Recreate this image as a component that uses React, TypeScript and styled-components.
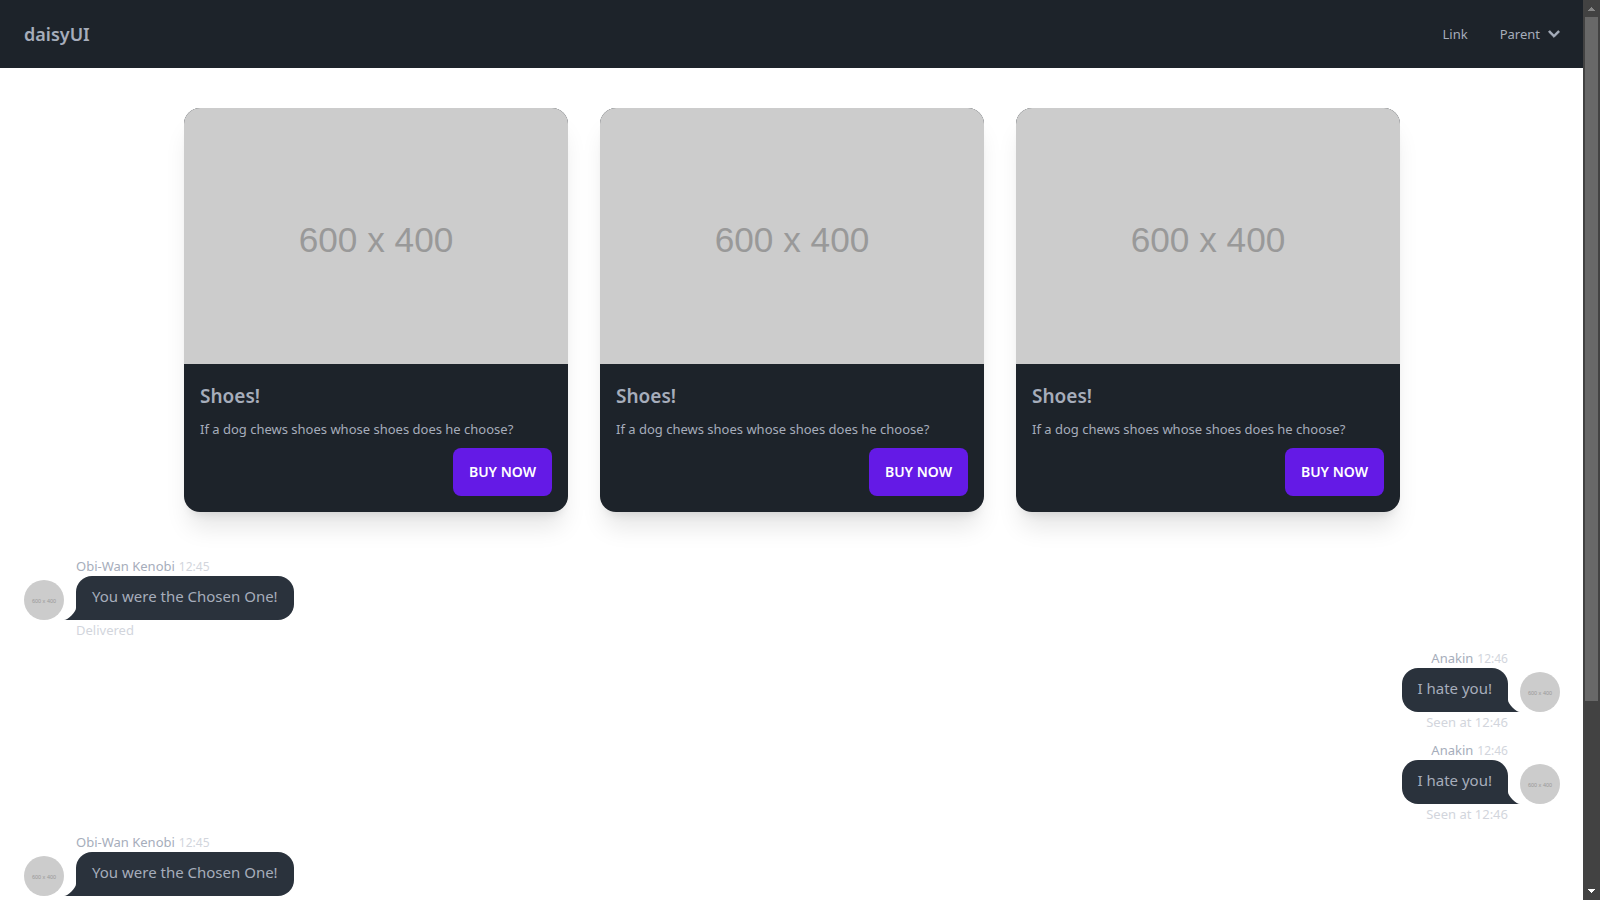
import React from "react";
import styled, { createGlobalStyle } from "styled-components";

const color = {
  base: "#1d232a",
  bubble: "#2a323c",
  text: "#a6adbb",
  primary: "#641ae6",
  placeholder: "#cccccc",
  placeholderText: "#999999",
};

const GlobalStyle = createGlobalStyle`
  *, *::before, *::after { box-sizing: border-box; }
  body {
    margin: 0;
    background: #ffffff;
    color: ${color.text};
    font-family: "Noto Sans", "Open Sans", sans-serif;
    font-size: 15px;
    line-height: 24px;
  }
`;

const Page = styled.div`
  height: 100vh;
  overflow: hidden;
  padding-right: 16px;
`;

/* Navigation bar */

const Navbar = styled.header`
  display: flex;
  align-items: center;
  justify-content: space-between;
  min-height: 68px;
  padding: 0 8px;
  background: ${color.base};
`;

const Brand = styled.a`
  padding: 8px 16px;
  color: inherit;
  font-size: 18px;
  font-weight: 600;
  line-height: 28px;
  text-decoration: none;
`;

const Menu = styled.ul`
  display: flex;
  margin: 0;
  padding: 0;
  list-style: none;
  font-size: 13px;
  line-height: 20px;
`;

const MenuLink = styled.a`
  display: block;
  padding: 8px 16px;
  color: inherit;
  text-decoration: none;
`;

const MenuToggle = styled.button`
  display: flex;
  align-items: center;
  gap: 8px;
  padding: 8px 16px;
  border: 0;
  background: none;
  color: inherit;
  font: inherit;
  cursor: pointer;
`;

const ChevronIcon = styled.svg`
  width: 12px;
  height: 8px;
  fill: currentColor;
  stroke: currentColor;
  stroke-width: 0.8;
`;

/* Product cards */

const CardGrid = styled.section`
  display: grid;
  grid-template-columns: repeat(3, 1fr);
  gap: 32px;
  max-width: 1280px;
  margin: 0 auto;
  padding: 40px 32px;
`;

const Card = styled.article`
  display: flex;
  flex-direction: column;
  overflow: hidden;
  border-radius: 16px;
  background: ${color.base};
  box-shadow: 0 20px 25px -5px rgba(0, 0, 0, 0.1), 0 8px 10px -6px rgba(0, 0, 0, 0.1);
`;

const CardBody = styled.div`
  display: flex;
  flex-direction: column;
  gap: 8px;
  padding: 16px;
`;

const CardTitle = styled.h2`
  margin: 0;
  padding-top: 2px;
  font-size: 19px;
  font-weight: 600;
  line-height: 28px;
`;

const CardText = styled.p`
  margin: 0;
  font-size: 13px;
  line-height: 22px;
`;

const CardActions = styled.div`
  display: flex;
  justify-content: flex-end;
`;

const BuyButton = styled.button`
  min-height: 48px;
  padding: 0 16px;
  border: 0;
  border-radius: 8px;
  background: ${color.primary};
  color: #ffffff;
  font-family: inherit;
  font-size: 14px;
  font-weight: 600;
  line-height: 14px;
  text-transform: uppercase;
  cursor: pointer;
`;

const Picture = styled.svg`
  display: block;
  width: 100%;
  aspect-ratio: 3 / 2;
`;

/* Chat */

type Side = "start" | "end";

const ChatRow = styled.div<{ $side: Side }>`
  display: grid;
  grid-template-columns: ${(p) => (p.$side === "start" ? "auto 1fr" : "1fr auto")};
  grid-template-areas: ${(p) =>
    p.$side === "start"
      ? '". header" "avatar bubble" ". footer"'
      : '"header ." "bubble avatar" "footer ."'};
  column-gap: 12px;
  justify-items: ${(p) => p.$side};
  padding: 4px 24px;
`;

const ChatHeader = styled.div`
  grid-area: header;
  display: flex;
  align-items: baseline;
  gap: 4px;
  height: 20px;
  font-size: 13px;
  line-height: 20px;
`;

const ChatTime = styled.time`
  font-size: 12px;
  opacity: 0.5;
`;

const Avatar = styled.div`
  grid-area: avatar;
  align-self: end;
  width: 40px;
  height: 40px;
  overflow: hidden;
  border-radius: 50%;

  svg {
    height: 100%;
  }
`;

const Bubble = styled.div<{ $side: Side }>`
  grid-area: bubble;
  position: relative;
  min-height: 44px;
  padding: 8px 16px;
  border-radius: ${(p) => (p.$side === "start" ? "16px 16px 16px 0" : "16px 16px 0 16px")};
  background: ${color.bubble};
`;

const Tail = styled.svg<{ $side: Side }>`
  position: absolute;
  bottom: 0;
  ${(p) => (p.$side === "start" ? "right: 100%;" : "left: 100%; transform: scaleX(-1);")}
  width: 12px;
  height: 12px;
  fill: ${color.bubble};
`;

const ChatFooter = styled.div`
  grid-area: footer;
  font-size: 13px;
  line-height: 20px;
  opacity: 0.5;
`;

/* Scroll bar */

const ScrollTrack = styled.div`
  position: fixed;
  top: 0;
  right: 0;
  bottom: 0;
  display: flex;
  flex-direction: column;
  align-items: center;
  width: 17px;
  background: #424242;
`;

const ScrollArrow = styled.svg<{ $active?: boolean }>`
  flex: none;
  width: 17px;
  height: 17px;
  fill: ${(p) => (p.$active ? "#ffffff" : "#868686")};
`;

const ScrollRail = styled.div`
  flex: 1;
  width: 13px;
`;

const ScrollThumb = styled.div`
  height: 79%;
  background: #686868;
`;

function Placeholder() {
  return (
    <Picture viewBox="0 0 600 400" preserveAspectRatio="xMidYMid slice" role="img" aria-label="600 x 400">
      <rect width="600" height="400" fill={color.placeholder} />
      <text
        x="300"
        y="225"
        textAnchor="middle"
        fill={color.placeholderText}
        fontFamily='"Liberation Sans", Arial, sans-serif'
        fontSize="55"
      >
        600 x 400
      </text>
    </Picture>
  );
}

function ProductCard() {
  return (
    <Card>
      <Placeholder />
      <CardBody>
        <CardTitle>Shoes!</CardTitle>
        <CardText>If a dog chews shoes whose shoes does he choose?</CardText>
        <CardActions>
          <BuyButton type="button">Buy Now</BuyButton>
        </CardActions>
      </CardBody>
    </Card>
  );
}

interface Message {
  side: Side;
  name: string;
  time: string;
  text: string;
  status?: string;
}

function ChatMessage({ side, name, time, text, status }: Message) {
  return (
    <ChatRow $side={side}>
      <ChatHeader>
        {name} <ChatTime>{time}</ChatTime>
      </ChatHeader>
      <Avatar>
        <Placeholder />
      </Avatar>
      <Bubble $side={side}>
        {text}
        <Tail $side={side} viewBox="0 0 3 3" aria-hidden="true">
          <path d="M0 3 L3 3 L3 0 C3 1 1 3 0 3" />
        </Tail>
      </Bubble>
      {status && <ChatFooter>{status}</ChatFooter>}
    </ChatRow>
  );
}

const messages: Message[] = [
  { side: "start", name: "Obi-Wan Kenobi", time: "12:45", text: "You were the Chosen One!", status: "Delivered" },
  { side: "end", name: "Anakin", time: "12:46", text: "I hate you!", status: "Seen at 12:46" },
  { side: "end", name: "Anakin", time: "12:46", text: "I hate you!", status: "Seen at 12:46" },
  { side: "start", name: "Obi-Wan Kenobi", time: "12:45", text: "You were the Chosen One!" },
];

export default function App() {
  return (
    <>
      <GlobalStyle />
      <Page>
        <Navbar>
          <Brand href="#">daisyUI</Brand>
          <nav>
            <Menu>
              <li>
                <MenuLink href="#">Link</MenuLink>
              </li>
              <li>
                <MenuToggle type="button" aria-haspopup="true">
                  Parent
                  <ChevronIcon viewBox="5.5 8 13 8.6" aria-hidden="true">
                    <path d="M7.41 8.59 12 13.17l4.59-4.58L18 10l-6 6-6-6z" />
                  </ChevronIcon>
                </MenuToggle>
              </li>
            </Menu>
          </nav>
        </Navbar>
        <main>
          <CardGrid>
            <ProductCard />
            <ProductCard />
            <ProductCard />
          </CardGrid>
          <section>
            {messages.map((message, i) => (
              <ChatMessage key={i} {...message} />
            ))}
          </section>
        </main>
      </Page>
      <ScrollTrack aria-hidden="true">
        <ScrollArrow viewBox="0 0 17 17">
          <path d="M5 11h7v-1h-1v-1h-1v-1h-1v-1h-1v1h-1v1h-1v1h-1z" />
        </ScrollArrow>
        <ScrollRail>
          <ScrollThumb />
        </ScrollRail>
        <ScrollArrow viewBox="0 0 17 17" $active>
          <path d="M5 6h7v1h-1v1h-1v1h-1v1h-1v-1h-1v-1h-1v-1h-1z" />
        </ScrollArrow>
      </ScrollTrack>
    </>
  );
}
